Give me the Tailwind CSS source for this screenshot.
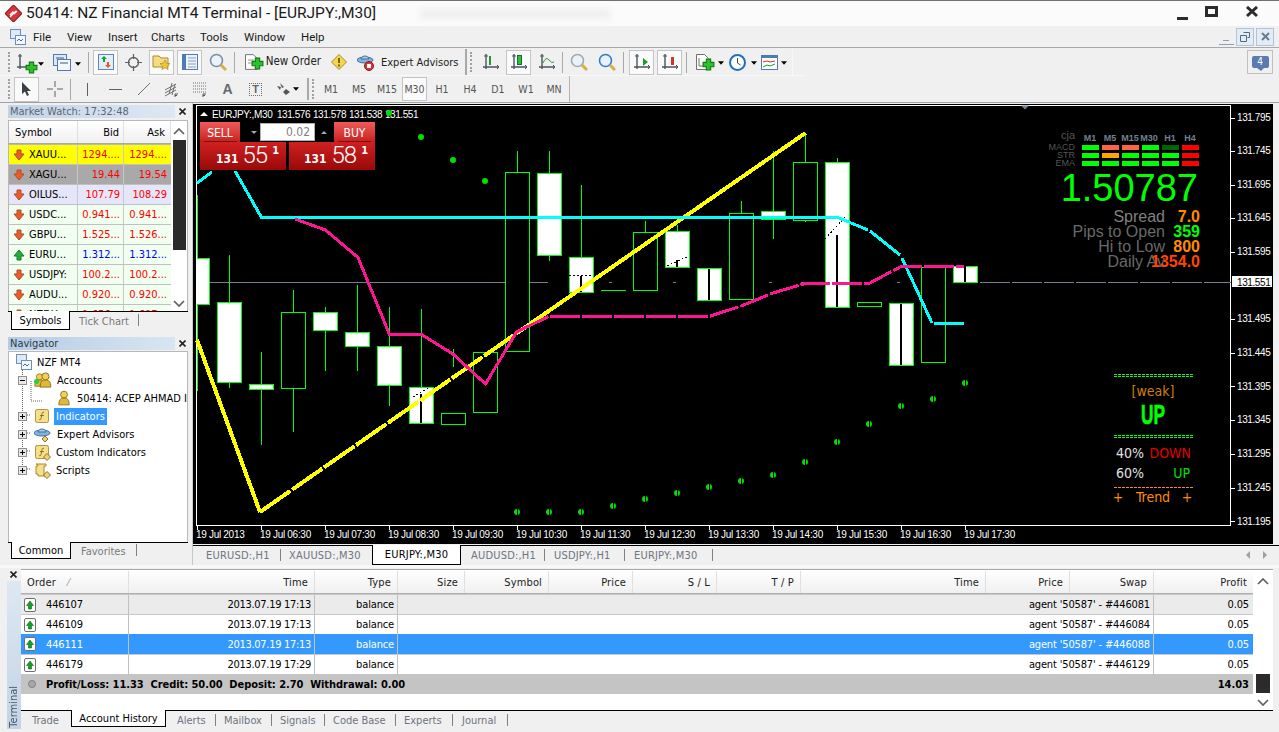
<!DOCTYPE html>
<html lang="en">
<head>
<meta charset="UTF-8">
<title>50414: NZ Financial MT4 Terminal</title>
<script src="https://cdn.jsdelivr.net/npm/@tailwindcss/browser@4"></script>
</head>
<body class="w-[1279px] h-[732px] overflow-hidden bg-[#f0f0f0] text-black text-[11px] leading-none font-['DejaVu_Sans_Condensed','DejaVu_Sans',sans-serif]">

<!-- shared small icons -->
<svg width="0" height="0" class="absolute">
  <symbol id="dn" viewBox="0 0 12 12"><path d="M4 1h4v4h3L6 11 1 5h3z" fill="#f0592a" stroke="#a8502a" stroke-width="1"/></symbol>
  <symbol id="up" viewBox="0 0 12 12"><path d="M4 11h4V7h3L6 1 1 7h3z" fill="#1fae3a" stroke="#1a7a2a" stroke-width="1"/></symbol>
  <symbol id="axes" viewBox="0 0 18 18"><path d="M4 1v15M1 14h16" stroke="#4a5560" stroke-width="1.4" fill="none"/><path d="M2 3h4M15 12l2 2-2 2" stroke="#4a5560" fill="none"/></symbol>
  <symbol id="plus" viewBox="0 0 12 12"><path d="M4 1h4v3h3v4H8v3H4V8H1V4h3z" fill="#2fc02f" stroke="#0c7a0c"/></symbol>
  <symbol id="lens" viewBox="0 0 18 18"><circle cx="7.5" cy="7.5" r="6" fill="#eaf3fa" stroke="currentColor" stroke-width="1.6"/><path d="M12 12l5 5" stroke="#d8b040" stroke-width="3"/></symbol>
  <symbol id="tree-plus" viewBox="0 0 9 9"><rect x=".5" y=".5" width="8" height="8" fill="#e8e8e8" stroke="#909090"/><path d="M2 4.5h5M4.5 2v5" stroke="#000"/></symbol>
  <symbol id="gold" viewBox="0 0 14 18"><circle cx="7" cy="5" r="4" fill="#f0cf5a" stroke="#8a6a10"/><path d="M1 17c0-7 3-8 6-8s6 1 6 8z" fill="#e2b83a" stroke="#8a6a10"/></symbol>
  <symbol id="ftile" viewBox="0 0 15 15"><rect x=".5" y=".5" width="14" height="14" rx="2" fill="#f6de8a" stroke="#a88a30"/><path d="M9.5 3.5C7.5 3 7.5 5 7 7.5S6.500 12 4.500 11.500M5.500 7h4" stroke="#8a6410" fill="none"/></symbol>
  <symbol id="small-diamond" viewBox="0 0 8 8"><path d="M4 .5L7.500 4 4 7.500 .5 4z" fill="#f0d070" stroke="#8a7030"/></symbol>
  <symbol id="chev-up" viewBox="0 0 12 7"><path d="M1 6l5-5 5 5" fill="none" stroke="#606060" stroke-width="1.700"/></symbol>
  <symbol id="chev-dn" viewBox="0 0 12 7"><path d="M1 1l5 5 5-5" fill="none" stroke="#606060" stroke-width="1.700"/></symbol>
  <symbol id="caret" viewBox="0 0 7 4"><path d="M0 0h7L3.500 4z" fill="#000"/></symbol>
  <symbol id="order-up" viewBox="0 0 12 14"><rect x=".5" y=".5" width="11" height="13" rx="1.500" fill="#fff" stroke="#707070"/><path d="M4.500 11V7.500H2.500L6 3l3.500 4.500H7.500V11z" fill="#12a028" stroke="#0a6a18" stroke-width=".6"/></symbol>
</svg>

<!-- title bar -->
<header class="h-[26px] flex items-center border-t border-[#707070] bg-[#fbfbfb] relative">
  <svg class="ml-[5px] w-[17px] h-[17px]" viewBox="0 0 17 17"><rect x="2.500" y="2.500" width="12" height="12" rx="1" transform="rotate(45 8.500 8.500)" fill="#d8343a" stroke="#8a1a20"/><path d="M5 10l3-3 1.500 1.500L12 6M5 12l6-6" stroke="#fff" stroke-width="1.300" fill="none"/></svg>
  <span class="ml-[4px] w-[328px] whitespace-nowrap text-[15.500px] text-[#1a1a1a] font-['Roboto',sans-serif]">50414: NZ Financial MT4 Terminal - [EURJPY:,M30]</span>
  <div class="ml-[66px] w-[190px] h-[10px] bg-[#eeeeee] blur-[3px]"></div>
  <div class="ml-auto flex items-center">
    <svg class="w-[12px] h-[12px] mr-[16px]" viewBox="0 0 12 12"><rect x="0" y="9" width="11" height="3" fill="#2b2b2b"/></svg>
    <svg class="w-[13px] h-[12px] mr-[28px] -mt-[3px]" viewBox="0 0 13 12"><path d="M0 0h13v11H0z M3 3v5h7V3z" fill="#2b2b2b" fill-rule="evenodd"/></svg>
    <svg class="w-[12px] h-[12px] mr-[21px] -mt-[3px]" viewBox="0 0 12 12"><path d="M1 1l10 9M11 1L1 10" stroke="#2b2b2b" stroke-width="3"/></svg>
  </div>
</header>

<!-- menu bar -->
<nav class="h-[22px] flex items-center border-b border-[#a8a8a8] text-[11.500px] text-[#1a1a1a] font-['Roboto',sans-serif]">
  <svg class="ml-[10px] w-[16px] h-[16px]" viewBox="0 0 16 16"><rect x=".5" y=".5" width="10" height="9" fill="#dfe9f5" stroke="#6a8fc0"/><rect x="5.500" y="6.500" width="10" height="9" fill="#f4f8fc" stroke="#6a8fc0"/><path d="M7 12l2-2 2 2 2-2" stroke="#3a6ab0" fill="none"/></svg>
  <span class="ml-[7px] w-[34px] pt-[2px]">File</span>
  <span class="w-[41px] pt-[2px]">View</span>
  <span class="w-[43px] pt-[2px]">Insert</span>
  <span class="w-[49px] pt-[2px]">Charts</span>
  <span class="w-[44px] pt-[2px]">Tools</span>
  <span class="w-[57px] pt-[2px]">Window</span>
  <span class="pt-[2px]">Help</span>
  <div class="ml-auto flex items-center gap-[2px] mr-[5px] h-[19px]">
    <svg class="w-[15px] h-[5px] mt-[12px]" viewBox="0 0 15 5"><path d="M4 0h6v1H4zM0 4h15v1H0z" fill="#8aa0bc"/></svg>
    <span class="w-[18px] h-[18px] border border-[#b4c4d8] bg-[#e2ecf7] flex items-center justify-center"><svg class="w-[10px] h-[10px]" viewBox="0 0 10 10"><path d="M3.500 .5h6v5h-2M.5 3.500h6v6h-6z" fill="none" stroke="#55687e"/></svg></span>
    <span class="w-[18px] h-[18px] border border-[#b4c4d8] bg-[#e2ecf7] flex items-center justify-center"><svg class="w-[9px] h-[9px]" viewBox="0 0 9 9"><path d="M1 1l7 7M8 1L1 8" stroke="#6a7b90" stroke-width="2"/></svg></span>
  </div>
</nav>

<!-- toolbars -->
<div class="relative h-[55px] pt-[1px] border-b border-[#a0a0a0]">
  <div class="h-[26px] flex items-center text-[#222]">
    <div class="ml-[8px] w-[3px] h-[20px] border-l-2 border-dotted border-[#a0a0a0]"></div>
    <button class="w-[36px] h-[25px] flex items-center pl-[5px] relative">
      <svg class="w-[18px] h-[18px]"><use href="#axes"/></svg>
      <svg class="absolute left-[14px] top-[11px] w-[13px] h-[13px]"><use href="#plus"/></svg>
      <svg class="absolute left-[27px] top-[12px] w-[6px] h-[4px]"><use href="#caret"/></svg>
    </button>
    <button class="w-[37px] h-[25px] flex items-center pl-[6px] relative">
      <svg class="w-[18px] h-[17px]" viewBox="0 0 18 17"><rect x=".5" y=".5" width="13" height="11" fill="#dce8f5" stroke="#4f7bb2"/><rect x="4.500" y="5.500" width="13" height="11" fill="#f2f7fc" stroke="#4f7bb2"/><path d="M3 4h8M7 9h8" stroke="#3a5a80"/></svg>
      <svg class="absolute left-[28px] top-[12px] w-[6px] h-[4px]"><use href="#caret"/></svg>
    </button>
    <div class="mx-[4px] w-[1px] h-[21px] bg-[#a8a8a8]"></div>
    <button class="w-[25px] h-[25px] border border-[#c4c4c4] bg-[#fafafa] flex items-center justify-center">
      <svg class="w-[16px] h-[16px]" viewBox="0 0 16 16"><rect x=".5" y=".5" width="15" height="15" fill="#e4eef9" stroke="#5b86bc"/><path d="M5 8V5H3l3-3 3 3H7v3z" fill="#16a030"/><path d="M9 8v3H7l3 3 3-3h-2V8z" fill="#e8572a"/></svg>
    </button>
    <button class="ml-[3px] w-[25px] h-[25px] flex items-center justify-center">
      <svg class="w-[17px] h-[17px]" viewBox="0 0 17 17"><circle cx="8.500" cy="8.500" r="5" fill="none" stroke="#606060" stroke-width="1.400"/><path d="M8.500 0v5M8.500 12v5M0 8.500h5M12 8.500h5" stroke="#606060" stroke-width="1.200"/></svg>
    </button>
    <button class="ml-[3px] w-[25px] h-[25px] border border-[#c4c4c4] bg-[#fafafa] flex items-center justify-center">
      <svg class="w-[19px] h-[18px]" viewBox="0 0 19 18"><path d="M1 3h6l2 2h7v9H1z" fill="#f5dc80" stroke="#a88a30"/><path d="M13 7l1.500 3.200 3.500.4-2.600 2.400.7 3.500-3.100-1.800L9.900 16.500l.7-3.500L8 10.600l3.500-.4z" fill="#f0c830" stroke="#a88a30" stroke-width=".7"/></svg>
    </button>
    <button class="ml-[3px] w-[25px] h-[25px] border border-[#c4c4c4] bg-[#fafafa] flex items-center justify-center">
      <svg class="w-[16px] h-[16px]" viewBox="0 0 16 16"><rect x=".5" y=".5" width="15" height="15" fill="#edf3fa" stroke="#4f7bb2"/><path d="M1 1h3v14H1z" fill="#4f7bb2"/><path d="M6 4h8M6 7h8M6 10h8M6 13h8" stroke="#8aa0bc"/></svg>
    </button>
    <button class="ml-[3px] w-[25px] h-[25px] flex items-center justify-center text-[#7a8ea8]">
      <svg class="w-[18px] h-[18px]"><use href="#lens"/></svg>
    </button>
    <div class="mx-[4px] w-[1px] h-[21px] bg-[#a8a8a8]"></div>
    <button class="ml-[6px] flex items-center w-[76px] relative">
      <svg class="w-[13px] h-[16px]" viewBox="0 0 13 16"><path d="M.5.5h8l4 4v11H.5z" fill="#fff" stroke="#707070"/><path d="M3 6h6M3 9h6" stroke="#909090"/></svg>
      <svg class="absolute left-[6px] top-[3px] w-[13px] h-[13px]"><use href="#plus"/></svg>
      <span class="ml-[8px] text-[11.500px] whitespace-nowrap">New Order</span>
    </button>
    <button class="ml-[5px] w-[25px] h-[25px] flex items-center justify-center">
      <svg class="w-[16px] h-[16px]" viewBox="0 0 16 16"><path d="M8 .5L15.500 8 8 15.500 .5 8z" fill="#f5d54a" stroke="#a88a30"/><path d="M8 4v5M8 10.500v2" stroke="#5a4a10" stroke-width="1.600"/></svg>
    </button>
    <button class="ml-[4px] flex items-center w-[110px]">
      <svg class="ml-[2px] w-[17px] h-[17px]" viewBox="0 0 17 17"><ellipse cx="8" cy="6" rx="8" ry="3" fill="#7fb6e0" stroke="#3f6f9a"/><path d="M4 5c1-4 7-4 8 0z" fill="#a9cdea" stroke="#3f6f9a"/><circle cx="12" cy="12" r="4.500" fill="#d8343a" stroke="#8a1a20"/><rect x="10" y="10" width="4" height="4" fill="#fff"/></svg>
      <span class="ml-[7px] text-[11px] text-[#222] whitespace-nowrap">Expert Advisors</span>
    </button>
    <div class="w-[2px] h-[26px] bg-[#a8a8a8]"></div>
    <div class="ml-[3px] w-[2px] h-[20px] border-l-2 border-dotted border-[#a0a0a0]"></div>
    <button class="ml-[6px] w-[25px] h-[25px] flex items-center justify-center relative"><svg class="w-[18px] h-[18px]"><use href="#axes"/></svg><span class="absolute left-[11px] top-[6px] w-[2px] h-[9px] bg-[#1a9a30]"></span></button>
    <button class="ml-[3px] w-[25px] h-[25px] border border-[#c4c4c4] bg-[#fafafa] flex items-center justify-center relative"><svg class="w-[18px] h-[18px]"><use href="#axes"/></svg><span class="absolute left-[10px] top-[4px] w-[5px] h-[10px] bg-[#2ec03a] border border-[#15702a]"></span></button>
    <button class="ml-[3px] w-[25px] h-[25px] flex items-center justify-center relative"><svg class="w-[18px] h-[18px]" viewBox="0 0 18 18"><use href="#axes"/><path d="M5 10q3-7 6-3t5 2" stroke="#2a9a3a" fill="none"/></svg></button>
    <div class="mx-[3px] w-[1px] h-[21px] bg-[#a8a8a8]"></div>
    <button class="w-[25px] h-[25px] flex items-center justify-center text-[#a0a8b0]"><svg class="w-[18px] h-[18px]"><use href="#lens"/></svg></button>
    <button class="ml-[3px] w-[25px] h-[25px] flex items-center justify-center text-[#2f7fd0]"><svg class="w-[18px] h-[18px]"><use href="#lens"/></svg></button>
    <div class="mx-[4px] w-[1px] h-[21px] bg-[#a8a8a8]"></div>
    <button class="ml-[1px] w-[25px] h-[25px] border border-[#c4c4c4] bg-[#fafafa] flex items-center justify-center relative"><svg class="w-[18px] h-[18px]"><use href="#axes"/></svg><span class="absolute left-[13px] top-[7px] border-l-[5px] border-l-[#1a9a30] border-y-[4px] border-y-transparent"></span></button>
    <button class="ml-[3px] w-[25px] h-[25px] border border-[#c4c4c4] bg-[#fafafa] flex items-center justify-center relative"><svg class="w-[18px] h-[18px]"><use href="#axes"/></svg><span class="absolute left-[13px] top-[6px] w-[3px] h-[8px] bg-[#d83030]"></span></button>
    <div class="ml-[4px] w-[1px] h-[21px] bg-[#a8a8a8]"></div>
    <button class="ml-[9px] w-[30px] flex items-center relative">
      <svg class="w-[13px] h-[16px]" viewBox="0 0 13 16"><path d="M.5.5h8l4 4v11H.5z" fill="#fff" stroke="#707070"/><path d="M3 4v8h6" stroke="#707070" fill="none"/></svg>
      <svg class="absolute left-[6px] top-[4px] w-[13px] h-[13px]"><use href="#plus"/></svg>
      <svg class="absolute left-[22px] top-[7px] w-[6px] h-[4px]"><use href="#caret"/></svg>
    </button>
    <button class="ml-[3px] w-[30px] flex items-center relative">
      <svg class="w-[17px] h-[17px]" viewBox="0 0 17 17"><circle cx="8.500" cy="8.500" r="7.500" fill="#fff" stroke="#1f6fc0" stroke-width="2"/><path d="M8.500 4v5l3 2" stroke="#444" fill="none"/></svg>
      <svg class="absolute left-[22px] top-[7px] w-[6px] h-[4px]"><use href="#caret"/></svg>
    </button>
    <button class="ml-[2px] w-[28px] flex items-center relative">
      <svg class="w-[17px] h-[15px]" viewBox="0 0 17 15"><rect x=".5" y=".5" width="16" height="14" fill="#fff" stroke="#4f7bb2"/><rect x="1" y="1" width="15" height="2" fill="#4f7bb2"/><path d="M2 7l4-1 3 1 5-1" stroke="#d83030" fill="none"/><path d="M2 12l4-2 3 1 5-2" stroke="#1a9a30" fill="none"/></svg>
      <svg class="absolute left-[20px] top-[6px] w-[6px] h-[4px]"><use href="#caret"/></svg>
    </button>
    <div class="ml-[3px] w-[1px] h-[26px] bg-[#f8f8f8]"></div>
    <div class="ml-auto mr-[6px] w-[26px] h-[24px] border border-[#c0c0c0] flex items-center justify-center">
      <div class="relative w-[17px] h-[12px] rounded-[2px] bg-[#5a7bb0] flex items-center justify-center text-white text-[10px]">4<span class="absolute left-[5px] -bottom-[3px] border-l-[4px] border-l-transparent border-r-[3px] border-r-transparent border-t-[3px] border-t-[#5a7bb0]"></span></div>
    </div>
  </div>
  <div class="h-[1px] w-[804px] bg-[#f8f8f8]"></div>
  <div class="h-[26px] flex items-center text-[#444]">
    <div class="ml-[8px] w-[3px] h-[20px] border-l-2 border-dotted border-[#a0a0a0]"></div>
    <button class="ml-[3px] w-[25px] h-[25px] border border-[#c4c4c4] bg-[#fafafa] flex items-center justify-center">
      <svg class="w-[11px] h-[15px]" viewBox="0 0 11 15"><path d="M1 0v12l3-2.500L6 14l2-1-2-4h4z" fill="#3a3f45"/></svg>
    </button>
    <button class="ml-[3px] w-[25px] h-[25px] flex items-center justify-center"><svg class="w-[16px] h-[16px]" viewBox="0 0 16 16"><path d="M8 0v6M8 10v6M0 8h6M10 8h6" stroke="#606060"/></svg></button>
    <div class="ml-[3px] w-[1px] h-[21px] bg-[#a8a8a8]"></div>
    <button class="ml-[4px] w-[25px] h-[25px] flex items-center justify-center"><span class="w-[1px] h-[13px] bg-[#606060]"></span></button>
    <button class="ml-[3px] w-[25px] h-[25px] flex items-center justify-center"><span class="w-[13px] h-[1px] bg-[#606060]"></span></button>
    <button class="ml-[3px] w-[25px] h-[25px] flex items-center justify-center"><svg class="w-[14px] h-[14px]" viewBox="0 0 14 14"><path d="M1 13L13 1" stroke="#707070"/></svg></button>
    <button class="ml-[3px] w-[25px] h-[25px] flex items-center justify-center"><svg class="w-[16px] h-[17px]" viewBox="0 0 16 17"><path d="M1 9l11-6M1 12l11-6M1 15l11-6M5 13l3-11M8 14l3-11" stroke="#707070" fill="none"/><path d="M11 16v-3h3M11 14.500h2" stroke="#555" fill="none"/></svg></button>
    <button class="ml-[3px] w-[25px] h-[25px] flex items-center justify-center"><svg class="w-[16px] h-[17px]" viewBox="0 0 16 17"><path d="M1 2h13M1 5h13M1 8h13M1 11h13" stroke="#707070" stroke-dasharray="1 1"/><path d="M11 16v-3h3M11 14.500h2" stroke="#555" fill="none"/></svg></button>
    <button class="ml-[3px] w-[25px] h-[25px] flex items-center justify-center text-[14px] font-bold text-[#606870] font-['Liberation_Sans',sans-serif]">A</button>
    <button class="ml-[3px] w-[25px] h-[25px] flex items-center justify-center"><span class="w-[13px] h-[13px] border border-dotted border-[#707070] flex items-center justify-center text-[11px] font-bold text-[#606870] font-['Liberation_Sans',sans-serif]">T</span></button>
    <button class="ml-[3px] w-[36px] h-[25px] flex items-center pl-[6px]">
      <svg class="w-[14px] h-[13px]" viewBox="0 0 14 13"><path d="M3 0l4 4-2 1zM0 3l4 1-1 3zM9 6l4 3-4 3-3-3z" fill="#555"/></svg>
      <svg class="ml-[2px] w-[6px] h-[4px]"><use href="#caret"/></svg>
    </button>
    <div class="w-[2px] h-[22px] bg-[#a8a8a8]"></div>
    <div class="ml-[3px] w-[2px] h-[20px] border-l-2 border-dotted border-[#a0a0a0]"></div>
    <div class="ml-[3px] flex items-center text-[#555] text-[10.500px]">
      <span class="w-[28px] text-center">M1</span>
      <span class="w-[28px] text-center">M5</span>
      <span class="w-[28px] text-center">M15</span>
      <span class="w-[25px] h-[24px] mx-[1px] border border-[#c4c4c4] bg-[#fafafa] flex items-center justify-center">M30</span>
      <span class="w-[28px] text-center">H1</span>
      <span class="w-[28px] text-center">H4</span>
      <span class="w-[28px] text-center">D1</span>
      <span class="w-[28px] text-center">W1</span>
      <span class="w-[28px] text-center">MN</span>
    </div>
    <div class="ml-[1px] w-[1px] h-[26px] bg-[#b4b4b4]"></div>
  </div>
</div>

<!-- workspace -->
<main class="h-[462px] flex">
  <!-- left docks -->
  <aside class="w-[193px] pl-[8px] pr-[4px] pt-[2px] border-r border-[#c8c8c8]">
    <section class="h-[228px]">
      <div class="h-[13px] w-[167px] flex items-center pl-[2px] bg-gradient-to-r from-[#c3d4e6] to-[#dde8f3] text-[#5a6673] relative">Market Watch: 17:32:48
        <svg class="absolute left-[171px] top-[3px] w-[7px] h-[7px]" viewBox="0 0 7 7"><path d="M.5.5l6 6M6.500.5l-6 6" stroke="#222" stroke-width="1.600"/></svg>
      </div>
      <div class="mt-[2px] relative h-[191px] bg-white border border-[#b8b8b8] border-b-0 flex overflow-hidden">
        <div class="w-[162px] overflow-hidden">
          <div class="h-[23px] grid grid-cols-[69px_46px_47px] items-center bg-gradient-to-b from-white to-[#f0f0f0] border-b border-[#a8a8a8]">
            <span class="pl-[6px] h-full flex items-center border-r border-[#e0e0e0]">Symbol</span>
            <span class="pr-[4px] h-full flex items-center justify-end border-r border-[#e0e0e0]">Bid</span>
            <span class="pr-[5px] h-full flex items-center justify-end border-r border-[#e0e0e0]">Ask</span>
          </div>
          <div class="h-[20px] grid grid-cols-[69px_46px_47px] items-center bg-[#ffff00] border-t border-[#b8b8b8] text-[#ff0000]">
            <span class="flex items-center pl-[4px] h-full border-r border-[#c8c8c8] text-black"><svg class="w-[12px] h-[12px] mr-[4px]"><use href="#dn"/></svg>XAUU...</span>
            <span class="text-right pr-[3px] h-full flex items-center justify-end border-r border-[#c8c8c8]">1294....</span>
            <span class="text-right pr-[4px]">1294....</span>
          </div>
          <div class="h-[20px] grid grid-cols-[69px_46px_47px] items-center bg-[#a9a9a9] border-t border-[#c0c0c0] text-[#ff0000]">
            <span class="flex items-center pl-[4px] h-full border-r border-[#c8c8c8] text-black"><svg class="w-[12px] h-[12px] mr-[4px]"><use href="#dn"/></svg>XAGU...</span>
            <span class="text-right pr-[3px] h-full flex items-center justify-end border-r border-[#c8c8c8]">19.44</span>
            <span class="text-right pr-[4px]">19.54</span>
          </div>
          <div class="h-[20px] grid grid-cols-[69px_46px_47px] items-center bg-[#e6e6fa] border-t border-[#c0c0c0] text-[#ff0000]">
            <span class="flex items-center pl-[4px] h-full border-r border-[#c8c8c8] text-black"><svg class="w-[12px] h-[12px] mr-[4px]"><use href="#dn"/></svg>OILUS...</span>
            <span class="text-right pr-[3px] h-full flex items-center justify-end border-r border-[#c8c8c8]">107.79</span>
            <span class="text-right pr-[4px]">108.29</span>
          </div>
          <div class="h-[20px] grid grid-cols-[69px_46px_47px] items-center bg-[#f0fff0] border-t border-[#c0c0c0] text-[#ff0000]">
            <span class="flex items-center pl-[4px] h-full border-r border-[#c8c8c8] text-black"><svg class="w-[12px] h-[12px] mr-[4px]"><use href="#dn"/></svg>USDC...</span>
            <span class="text-right pr-[3px] h-full flex items-center justify-end border-r border-[#c8c8c8]">0.941...</span>
            <span class="text-right pr-[4px]">0.941...</span>
          </div>
          <div class="h-[20px] grid grid-cols-[69px_46px_47px] items-center bg-[#f0fff0] border-t border-[#c0c0c0] text-[#ff0000]">
            <span class="flex items-center pl-[4px] h-full border-r border-[#c8c8c8] text-black"><svg class="w-[12px] h-[12px] mr-[4px]"><use href="#dn"/></svg>GBPU...</span>
            <span class="text-right pr-[3px] h-full flex items-center justify-end border-r border-[#c8c8c8]">1.525...</span>
            <span class="text-right pr-[4px]">1.526...</span>
          </div>
          <div class="h-[20px] grid grid-cols-[69px_46px_47px] items-center bg-[#f0fff0] border-t border-[#c0c0c0] text-[#0000ff]">
            <span class="flex items-center pl-[4px] h-full border-r border-[#c8c8c8] text-black"><svg class="w-[12px] h-[12px] mr-[4px]"><use href="#up"/></svg>EURU...</span>
            <span class="text-right pr-[3px] h-full flex items-center justify-end border-r border-[#c8c8c8]">1.312...</span>
            <span class="text-right pr-[4px]">1.312...</span>
          </div>
          <div class="h-[20px] grid grid-cols-[69px_46px_47px] items-center bg-[#f0fff0] border-t border-[#c0c0c0] text-[#ff0000]">
            <span class="flex items-center pl-[4px] h-full border-r border-[#c8c8c8] text-black"><svg class="w-[12px] h-[12px] mr-[4px]"><use href="#dn"/></svg>USDJPY:</span>
            <span class="text-right pr-[3px] h-full flex items-center justify-end border-r border-[#c8c8c8]">100.2...</span>
            <span class="text-right pr-[4px]">100.2...</span>
          </div>
          <div class="h-[20px] grid grid-cols-[69px_46px_47px] items-center bg-[#f0fff0] border-t border-[#c0c0c0] text-[#ff0000]">
            <span class="flex items-center pl-[4px] h-full border-r border-[#c8c8c8] text-black"><svg class="w-[12px] h-[12px] mr-[4px]"><use href="#dn"/></svg>AUDU...</span>
            <span class="text-right pr-[3px] h-full flex items-center justify-end border-r border-[#c8c8c8]">0.920...</span>
            <span class="text-right pr-[4px]">0.920...</span>
          </div>
          <div class="h-[20px] grid grid-cols-[69px_46px_47px] items-center bg-[#f0fff0] border-t border-[#c0c0c0] text-[#ff0000]">
            <span class="flex items-center pl-[4px] h-full border-r border-[#c8c8c8] text-black"><svg class="w-[12px] h-[12px] mr-[4px]"><use href="#dn"/></svg>NZDU...</span>
            <span class="text-right pr-[3px] h-full flex items-center justify-end border-r border-[#c8c8c8]">1.656...</span>
            <span class="text-right pr-[4px]">1.697...</span>
          </div>
        </div>
        <div class="flex-1 flex flex-col items-center bg-white relative">
          <svg class="mt-[7px] w-[12px] h-[7px]"><use href="#chev-up"/></svg>
          <div class="mt-[5px] w-[13px] h-[110px] bg-[#2b2b2b]"></div>
          <svg class="absolute bottom-[4px] w-[12px] h-[7px]"><use href="#chev-dn"/></svg>
        </div>
      </div>
      <div class="h-[20px] flex items-start pl-[3px] border-t border-black ml-0 text-[#7a7a7a]">
        <span class="w-[59px] h-[19px] -mt-[1px] bg-white border-x border-b border-black text-black flex items-center justify-center">Symbols</span>
        <span class="ml-[9px] mt-[4px]">Tick Chart</span>
        <span class="ml-[9px] mt-[2px] w-[1px] h-[12px] bg-[#808080]"></span>
      </div>
    </section>
    <section class="mt-[4px]">
      <div class="h-[13px] w-[167px] flex items-center pl-[2px] bg-gradient-to-r from-[#b4cce4] to-[#d8e6f2] text-[#2b3a4a] relative">Navigator
        <svg class="absolute left-[171px] top-[3px] w-[7px] h-[7px]" viewBox="0 0 7 7"><path d="M.5.5l6 6M6.500.5l-6 6" stroke="#222" stroke-width="1.600"/></svg>
      </div>
      <div class="mt-[1px] h-[191px] w-[180px] bg-white border border-[#b8b8b8] border-b-0 overflow-hidden whitespace-nowrap relative">
        <svg class="absolute left-0 top-0 w-[80px] h-[130px]" viewBox="0 0 80 130"><path d="M13.500 18v102M13.500 26v0M22 29v20h12M14 63h8M14 81h8M14 99h8M14 117h8" stroke="#606060" stroke-dasharray="1 1" fill="none"/></svg>
        <div class="h-[18px] mt-[1px] flex items-center relative pl-[7px]">
          <svg class="w-[16px] h-[16px]" viewBox="0 0 16 16"><rect x=".5" y=".5" width="10" height="9" fill="#dfe9f5" stroke="#6a8fc0"/><rect x="5.500" y="6.500" width="10" height="9" fill="#f4f8fc" stroke="#6a8fc0"/><path d="M7 12l2-2 2 2 2-2" stroke="#3a6ab0" fill="none"/></svg>
          <span class="ml-[5px]">NZF MT4</span>
        </div>
        <div class="h-[18px] flex items-center relative pl-[9px]">
          <svg class="w-[9px] h-[9px]" viewBox="0 0 9 9"><rect x=".5" y=".5" width="8" height="8" fill="#e8e8e8" stroke="#909090"/><path d="M2 4.500h5" stroke="#000"/></svg>
          <span class="relative ml-[7px] w-[18px] h-[17px]"><svg class="absolute left-[0px] top-[1px] w-[11px] h-[14px]"><use href="#gold"/></svg><svg class="absolute left-[5px] top-[0px] w-[13px] h-[16px]"><use href="#gold"/></svg><span class="absolute left-0 top-[7px] w-[5px] h-[5px] rounded-full bg-[#2ecc40]"></span></span>
          <span class="ml-[5px]">Accounts</span>
        </div>
        <div class="h-[18px] flex items-center relative pl-[49px]">
          <svg class="w-[13px] h-[16px]"><use href="#gold"/></svg>
          <span class="ml-[7px] text-black">50414: ACEP AHMAD I</span>
        </div>
        <div class="h-[18px] flex items-center relative pl-[9px]">
          <svg class="w-[9px] h-[9px]"><use href="#tree-plus"/></svg>
          <svg class="ml-[8px] w-[14px] h-[14px]"><use href="#ftile"/></svg>
          <span class="ml-[5px] h-[17px] px-[2px] flex items-center bg-[#3399ff] text-white">Indicators</span>
        </div>
        <div class="h-[18px] flex items-center relative pl-[9px]">
          <svg class="w-[9px] h-[9px]"><use href="#tree-plus"/></svg>
          <svg class="ml-[7px] w-[17px] h-[15px]" viewBox="0 0 17 15"><ellipse cx="8" cy="6" rx="8" ry="3" fill="#7fb6e0" stroke="#3f6f9a"/><path d="M4 5c1-4 7-4 8 0z" fill="#a9cdea" stroke="#3f6f9a"/><path d="M11 9l3 3-3 3-3-3z" fill="#f0d070" stroke="#8a7030"/></svg>
          <span class="ml-[6px]">Expert Advisors</span>
        </div>
        <div class="h-[18px] flex items-center relative pl-[9px]">
          <svg class="w-[9px] h-[9px]"><use href="#tree-plus"/></svg>
          <span class="relative ml-[8px] w-[15px] h-[15px]"><svg class="w-[14px] h-[14px]"><use href="#ftile"/></svg><svg class="absolute left-[8px] top-[8px] w-[8px] h-[8px]"><use href="#small-diamond"/></svg></span>
          <span class="ml-[6px]">Custom Indicators</span>
        </div>
        <div class="h-[18px] flex items-center relative pl-[9px]">
          <svg class="w-[9px] h-[9px]"><use href="#tree-plus"/></svg>
          <span class="relative ml-[8px] w-[15px] h-[15px]"><svg class="w-[12px] h-[14px]" viewBox="0 0 12 14"><path d="M1 1h10v2H9v9h2v1H3v-2H1V3h2V2z" fill="#f6de8a" stroke="#a88a30"/></svg><svg class="absolute left-[8px] top-[8px] w-[8px] h-[8px]"><use href="#small-diamond"/></svg></span>
          <span class="ml-[6px]">Scripts</span>
        </div>
      </div>
      <div class="h-[19px] w-[180px] flex items-start pl-[3px] border-t border-black text-[#7a7a7a]">
        <span class="w-[60px] h-[17px] -mt-[1px] bg-white border-x border-b border-black text-black flex items-center justify-center">Common</span>
        <span class="ml-[10px] mt-[3px]">Favorites</span>
        <span class="ml-[10px] mt-[1px] w-[1px] h-[12px] bg-[#808080]"></span>
      </div>
    </section>
  </aside>

  <!-- chart and its tabs -->
  <div class="flex-1 flex flex-col">
    <div class="relative h-[441px] mr-[6px] bg-black overflow-hidden">
      <svg class="block w-[1080px] h-[441px]" viewBox="193 103 1080 441">
        <rect x="193" y="103" width="1080" height="1" fill="#f0f0f0"/>
        <g shape-rendering="crispEdges">
          <rect x="196" y="105" width="1035" height="1" fill="#fff"/><rect x="196" y="525" width="1035" height="1" fill="#fff"/>
          <rect x="196" y="105" width="1" height="421" fill="#fff"/><rect x="1230" y="105" width="1" height="421" fill="#fff"/>
          <path d="M209 282.500H545" stroke="#708090"/>
          <path d="M545 282.500H980" stroke="#708090" stroke-dasharray="3 29"/>
          <path d="M980 282.500H1231" stroke="#708090" stroke-dasharray="30 2"/>
          <g id="candles"></g>
          <!-- black overdraw inside the white bodies -->
          <path stroke="#000" stroke-width="2" fill="none" d="M421 394V423M581 276V292M677 260V267M709 269V300M837 235V307M901 304V365M965 266V282"/>
          <path stroke="#000" stroke-dasharray="2 2" fill="none" d="M413 397L428 388M569 275.500H593M667 266L689 256M825 239L847 215"/>
          <!-- indicator lines -->
          <path stroke="#ffff00" stroke-width="4" fill="none" d="M197 340L260 512"/>
          <path stroke="#ffff00" stroke-width="4" fill="none" stroke-dasharray="37 2" d="M260 512L517 333"/>
          <path stroke="#ffff00" stroke-width="4" fill="none" d="M517 333L805.500 133"/>
          <path stroke="#00ffff" stroke-width="3" fill="none" d="M197 183L212 172M235 171L261.500 217.500H838L868 230"/>
          <path stroke="#00ffff" stroke-width="3" fill="none" d="M870 231L900 255M902 258L932 323"/>
          <path stroke="#00ffff" stroke-width="3" fill="none" d="M934 323.500H964"/>
          <path stroke="#ff1493" stroke-width="3" fill="none" d="M295 219L325.500 230L358 257.500L389.500 334.500H421.500L453 354L485.500 384L516.500 332L548.500 316.500"/>
          <path stroke="#ff1493" stroke-width="3" fill="none" stroke-dasharray="30 2" d="M550 316.500H709L741 306L773 293L805 283.500H869L901 266.500H964"/>
        </g>
        <!-- parabolic dots -->
        <g fill="#00e000">
          <circle cx="421" cy="137" r="3"/><circle cx="453" cy="160" r="3"/><circle cx="485" cy="181" r="3"/>
          <ellipse cx="517" cy="512" rx="3" ry="3"/><ellipse cx="549" cy="512" rx="3" ry="3"/><ellipse cx="581" cy="512" rx="3" ry="3"/>
          <ellipse cx="613" cy="506" rx="3" ry="3"/><ellipse cx="645" cy="499" rx="3" ry="3"/><ellipse cx="677" cy="493" rx="3" ry="3"/>
          <ellipse cx="709" cy="487" rx="3" ry="3"/><ellipse cx="741" cy="481" rx="3" ry="3"/><ellipse cx="773" cy="475" rx="3" ry="3"/>
          <ellipse cx="805" cy="462" rx="3" ry="3"/><ellipse cx="837" cy="442" rx="3" ry="3"/><ellipse cx="869" cy="424" rx="3" ry="3"/>
          <ellipse cx="901" cy="406" rx="3" ry="3"/><ellipse cx="933" cy="399" rx="3" ry="3"/><ellipse cx="965" cy="383" rx="3" ry="3"/>
        </g>
        <path stroke="#000" fill="none" shape-rendering="crispEdges" d="M517.500 508v8M549.500 508v8M581.500 508v8M613.500 502v8M645.500 495v8M677.500 489v8M709.500 483v8M741.500 477v8M773.500 471v8M805.500 458v8M837.500 438v8M869.500 420v8M901.500 402v8M933.500 395v8M965.500 379v8"/>
        <!-- chart header -->
        <path d="M200 116l4-4 4 4z" fill="#fff"/>
        <g fill="#fff" class="text-[10px] tracking-[-0.45px] font-['Liberation_Sans',sans-serif]">
          <text y="118"><tspan x="212" class="tracking-[-0.3px]">EURJPY:,M30</tspan><tspan x="277">131.576</tspan><tspan x="313">131.578</tspan><tspan x="349">131.538</tspan><tspan x="385">131.551</tspan></text>
        </g>
        <circle cx="389" cy="113" r="3" fill="#00e000"/>
        <path d="M1021 105.500h8l-4 4z" fill="#708090"/>
        <!-- price axis -->
        <path stroke="#fff" shape-rendering="crispEdges" d="M1231 118.500h4M1231 151.500h4M1231 185.500h4M1231 218.500h4M1231 252.500h4M1231 319.500h4M1231 353.500h4M1231 386.500h4M1231 420.500h4M1231 454.500h4M1231 488.500h4M1231 521.500h4"/>
        <g fill="#fff" class="text-[10px] tracking-[-0.4px] font-['Liberation_Sans',sans-serif]">
          <text x="1237" y="121">131.795</text><text x="1237" y="154">131.745</text><text x="1237" y="188">131.695</text><text x="1237" y="221">131.645</text><text x="1237" y="255">131.595</text>
          <text x="1237" y="322">131.495</text><text x="1237" y="356">131.445</text><text x="1237" y="390">131.395</text><text x="1237" y="423">131.345</text><text x="1237" y="457">131.295</text><text x="1237" y="491">131.245</text><text x="1237" y="525">131.195</text>
        </g>
        <rect x="1232" y="276" width="40" height="11" fill="#fff"/>
        <text x="1237" y="285.500" fill="#000" class="text-[10px] tracking-[-0.4px] font-['Liberation_Sans',sans-serif]">131.551</text>
        <!-- time axis -->
        <path stroke="#fff" shape-rendering="crispEdges" d="M197.500 526v4M261.500 526v4M325.500 526v4M389.500 526v4M453.500 526v4M517.500 526v4M581.500 526v4M645.500 526v4M709.500 526v4M773.500 526v4M837.500 526v4M901.500 526v4M965.500 526v4"/>
        <g fill="#fff" class="text-[10px] tracking-[-0.3px] font-['Liberation_Sans',sans-serif]">
          <text x="196" y="538">19 Jul 2013</text><text x="260" y="538">19 Jul 06:30</text><text x="324" y="538">19 Jul 07:30</text><text x="388" y="538">19 Jul 08:30</text><text x="452" y="538">19 Jul 09:30</text><text x="516" y="538">19 Jul 10:30</text><text x="580" y="538">19 Jul 11:30</text><text x="644" y="538">19 Jul 12:30</text><text x="708" y="538">19 Jul 13:30</text><text x="772" y="538">19 Jul 14:30</text><text x="836" y="538">19 Jul 15:30</text><text x="900" y="538">19 Jul 16:30</text><text x="964" y="538">19 Jul 17:30</text>
        </g>
        <!-- signal table -->
        <g text-anchor="end" fill="#555" class="text-[9px] font-['Liberation_Sans',sans-serif]">
          <text x="1075" y="139" class="text-[11px]">cja</text><text x="1075" y="150">MACD</text><text x="1075" y="158">STR</text><text x="1075" y="166">EMA</text>
        </g>
        <g text-anchor="middle" fill="#708090" font-weight="700" class="text-[9px] font-['Liberation_Sans',sans-serif]">
          <text x="1090" y="140.500">M1</text><text x="1110" y="140.500">M5</text><text x="1130" y="140.500">M15</text><text x="1149" y="140.500">M30</text><text x="1170" y="140.500">H1</text><text x="1190" y="140.500">H4</text>
        </g>
        <g shape-rendering="crispEdges">
          <rect x="1082" y="145" width="17" height="5" fill="#00ff00"/><rect x="1102" y="145" width="17" height="5" fill="#ff6347"/><rect x="1122" y="145" width="17" height="5" fill="#ff6347"/><rect x="1142" y="145" width="17" height="5" fill="#00ff00"/><rect x="1162" y="145" width="17" height="5" fill="#006400"/><rect x="1182" y="145" width="17" height="5" fill="#ff0000"/>
          <rect x="1082" y="153" width="17" height="5" fill="#00ff00"/><rect x="1102" y="153" width="17" height="5" fill="#ffa500"/><rect x="1122" y="153" width="17" height="5" fill="#00ff00"/><rect x="1142" y="153" width="17" height="5" fill="#00ff00"/><rect x="1162" y="153" width="17" height="5" fill="#00ff00"/><rect x="1182" y="153" width="17" height="5" fill="#ff0000"/>
          <rect x="1082" y="161" width="17" height="5" fill="#00ff00"/><rect x="1102" y="161" width="17" height="5" fill="#00ff00"/><rect x="1122" y="161" width="17" height="5" fill="#00ff00"/><rect x="1142" y="161" width="17" height="5" fill="#00ff00"/><rect x="1162" y="161" width="17" height="5" fill="#00ff00"/><rect x="1182" y="161" width="17" height="5" fill="#ff0000"/>
        </g>
        <g class="font-['Liberation_Sans',sans-serif]" text-anchor="end">
          <text x="1198" y="201" fill="#00ff00" class="text-[38px]">1.50787</text>
          <g class="text-[16px]">
            <text x="1165" y="222" fill="#808080">Spread</text><text x="1165" y="237" fill="#696969">Pips to Open</text><text x="1165" y="252" fill="#696969">Hi to Low</text><text x="1165" y="267" fill="#696969">Daily Av</text>
          </g>
          <g font-weight="700" class="text-[16px]">
            <text x="1200" y="222" fill="#ff8c00">7.0</text><text x="1200" y="237" fill="#00ff00">359</text><text x="1200" y="252" fill="#ff8c00">800</text><text x="1200" y="267" fill="#ff4500">1354.0</text>
          </g>
        </g>
        <!-- trend box -->
        <g fill="#00ff00" shape-rendering="crispEdges">
          <path stroke="#00ff00" fill="none" stroke-dasharray="3 1" d="M1114 374.500h79M1114 376.500h79"/>
          <path stroke="#00ff00" fill="none" stroke-dasharray="3 1" d="M1114 435.500h79M1114 437.500h79"/>
          <path stroke="#ff8c00" fill="none" stroke-dasharray="3 1" d="M1114 487.500h79"/>
        </g>
        <text x="1153" y="396" text-anchor="middle" fill="#d08000" class="text-[14px]">[weak]</text>
        <text x="1153" y="424" text-anchor="middle" fill="#00ff00" font-weight="700" stroke="#00ff00" stroke-width=".6" textLength="24" lengthAdjust="spacingAndGlyphs" class="text-[27px] font-['Liberation_Sans',sans-serif]">UP</text>
        <g class="text-[14px]">
          <text x="1116" y="458" fill="#e0e0e0">40%</text><text x="1191" y="458" text-anchor="end" fill="#e00000">DOWN</text>
          <text x="1116" y="478" fill="#e0e0e0">60%</text><text x="1190" y="478" text-anchor="end" fill="#00e000">UP</text>
          <text x="1118" y="502" text-anchor="middle" fill="#ff8c00">+</text><text x="1153" y="502" text-anchor="middle" fill="#ff8c00">Trend</text><text x="1187" y="502" text-anchor="middle" fill="#ff8c00">+</text>
        </g>
      </svg>

      <!-- one click trading panel -->
      <div class="absolute left-[7px] top-[19px] w-[175px] text-white">
        <div class="h-[20px] flex items-center">
          <div class="w-[40px] h-[20px] bg-gradient-to-b from-[#ee5a5a] to-[#c81c1c] border-b-0 flex flex-col items-center justify-end"><span class="text-[12px] mb-[2px]">SELL</span><span class="w-[33px] h-[1px] bg-[#7a1010]"></span></div>
          <span class="ml-[8px] w-[12px] flex justify-center"><span class="border-x-[3px] border-x-transparent border-t-[3px] border-t-[#a0a8b0]"></span></span>
          <div class="w-[55px] h-[18px] bg-white border border-[#b0b0b0] text-[#808080] text-[12px] flex items-center justify-end pr-[4px]">0.02</div>
          <span class="w-[18px] flex justify-center"><span class="border-x-[3px] border-x-transparent border-b-[3px] border-b-[#a0a8b0]"></span></span>
          <div class="ml-auto w-[41px] h-[20px] bg-gradient-to-b from-[#ee5a5a] to-[#c81c1c] flex flex-col items-center justify-end"><span class="text-[12px] mb-[2px]">BUY</span><span class="w-[33px] h-[1px] bg-[#7a1010]"></span></div>
        </div>
        <div class="flex gap-[3px]">
          <div class="w-[86px] h-[28px] bg-gradient-to-b from-[#d02020] to-[#9a0808] flex items-end pl-[16px]">
            <span class="text-[12px] font-bold mb-[5px]">131</span>
            <span class="ml-[4px] text-[24px] font-light tracking-[-1px] font-['Roboto',sans-serif] mb-[3px]">55</span>
            <span class="ml-[5px] mb-[14px] text-[11px] font-bold">1</span>
          </div>
          <div class="w-[86px] h-[28px] bg-gradient-to-b from-[#d02020] to-[#9a0808] flex items-end pl-[15px]">
            <span class="text-[12px] font-bold mb-[5px]">131</span>
            <span class="ml-[5px] text-[24px] font-light tracking-[-1px] font-['Roboto',sans-serif] mb-[3px]">58</span>
            <span class="ml-[5px] mb-[14px] text-[11px] font-bold">1</span>
          </div>
        </div>
      </div>
    </div>
    <div class="mt-[1px] h-[20px] border-t border-black flex items-start text-[#6e7480] relative whitespace-nowrap tracking-[0.2px]">
      <span class="ml-[13px] mt-[4px] w-[66px]">EURUSD:,H1</span>
      <span class="ml-[8px] mt-[3px] w-[1px] h-[12px] bg-[#808080]"></span>
      <span class="ml-[8px] mt-[4px] w-[71px]">XAUUSD:,M30</span>
      <span class="ml-[12px] -mt-[1px] w-[89px] h-[20px] bg-white border-x border-b border-black text-black flex items-center justify-center">EURJPY:,M30</span>
      <span class="ml-[10px] mt-[4px] w-[62px]">AUDUSD:,H1</span>
      <span class="ml-[11px] mt-[3px] w-[1px] h-[12px] bg-[#808080]"></span>
      <span class="ml-[9px] mt-[4px] w-[59px]">USDJPY:,H1</span>
      <span class="ml-[11px] mt-[3px] w-[1px] h-[12px] bg-[#808080]"></span>
      <span class="ml-[9px] mt-[4px] w-[66px]">EURJPY:,M30</span>
      <span class="ml-[12px] mt-[3px] w-[1px] h-[12px] bg-[#808080]"></span>
      <span class="absolute left-[1053px] top-[5px] border-y-[4px] border-y-transparent border-r-[4px] border-r-[#a0a0a0]"></span>
      <span class="absolute left-[1070px] top-[5px] border-y-[4px] border-y-transparent border-l-[4px] border-l-[#a0a0a0]"></span>
    </div>
  </div>
</main>

<!-- terminal dock -->
<footer class="h-[167px] flex pl-[6px] pr-[6px] pt-[1px] bg-[#f0f0f0] border-t-[3px] border-[#f8f8f8]">
  <div class="w-[15px] flex flex-col items-center">
    <svg class="mt-[2px] w-[7px] h-[7px]" viewBox="0 0 7 7"><path d="M.5.5l6 6M6.500.5l-6 6" stroke="#222" stroke-width="1.600"/></svg>
    <div class="mt-[3px] w-[14px] flex-1 mb-[3px] bg-gradient-to-b from-[#dde8f3] to-[#c3d4e6] flex items-end justify-center">
      <span class="[writing-mode:vertical-rl] rotate-180 text-[#4a5a6a] mb-[1px]">Terminal</span>
    </div>
  </div>
  <div class="flex-1 flex flex-col border-t border-[#a8a8a8] bg-white relative">
    <div class="flex h-[140px]">
      <div class="w-[1232px]">
        <div class="h-[24px] pt-[1px] grid grid-cols-[108px_186px_83px_67px_84px_84px_84px_84px_185px_84px_84px_99px] items-center bg-gradient-to-b from-white to-[#f0f0f0] border-b border-[#b0b0b0] text-[#222] tracking-[0.15px]">
          <span class="pl-[6px] h-full flex items-center border-r border-[#e0e0e0]">Order <span class="ml-[12px] text-[#9a9a9a]">⁄</span></span>
          <span class="pr-[6px] h-full flex items-center justify-end border-r border-[#e0e0e0]">Time</span>
          <span class="pr-[6px] h-full flex items-center justify-end border-r border-[#e0e0e0]">Type</span>
          <span class="pr-[6px] h-full flex items-center justify-end border-r border-[#e0e0e0]">Size</span>
          <span class="pr-[6px] h-full flex items-center justify-end border-r border-[#e0e0e0]">Symbol</span>
          <span class="pr-[6px] h-full flex items-center justify-end border-r border-[#e0e0e0]">Price</span>
          <span class="pr-[6px] h-full flex items-center justify-end border-r border-[#e0e0e0]">S / L</span>
          <span class="pr-[6px] h-full flex items-center justify-end border-r border-[#e0e0e0]">T / P</span>
          <span class="pr-[6px] h-full flex items-center justify-end border-r border-[#e0e0e0]">Time</span>
          <span class="pr-[6px] h-full flex items-center justify-end border-r border-[#e0e0e0]">Price</span>
          <span class="pr-[6px] h-full flex items-center justify-end border-r border-[#e0e0e0]">Swap</span>
          <span class="pr-[6px] h-full flex items-center justify-end">Profit</span>
        </div>
        <div class="h-[20px] grid grid-cols-[108px_186px_83px_756px_99px] items-center bg-[#ebebeb] border-t border-[#c8c8c8] tracking-[-0.15px]">
          <span class="flex items-center pl-[3px] h-full border-r border-[#c0c0c0]"><svg class="w-[12px] h-[14px]"><use href="#order-up"/></svg><span class="ml-[10px]">446107</span></span>
          <span class="pr-[3px] h-full flex items-center justify-end border-r border-[#c0c0c0] tracking-[-0.3px]">2013.07.19 17:13</span>
          <span class="pr-[3px] h-full flex items-center justify-end border-r border-[#c0c0c0]">balance</span>
          <span class="pr-[3px] h-full flex items-center justify-end border-r border-[#c0c0c0]">agent '50587' - #446081</span>
          <span class="pr-[4px] text-right">0.05</span>
        </div>
        <div class="h-[20px] grid grid-cols-[108px_186px_83px_756px_99px] items-center bg-white border-t border-[#c8c8c8] tracking-[-0.15px]">
          <span class="flex items-center pl-[3px] h-full border-r border-[#c0c0c0]"><svg class="w-[12px] h-[14px]"><use href="#order-up"/></svg><span class="ml-[10px]">446109</span></span>
          <span class="pr-[3px] h-full flex items-center justify-end border-r border-[#c0c0c0] tracking-[-0.3px]">2013.07.19 17:13</span>
          <span class="pr-[3px] h-full flex items-center justify-end border-r border-[#c0c0c0]">balance</span>
          <span class="pr-[3px] h-full flex items-center justify-end border-r border-[#c0c0c0]">agent '50587' - #446084</span>
          <span class="pr-[4px] text-right">0.05</span>
        </div>
        <div class="h-[20px] grid grid-cols-[108px_186px_83px_756px_99px] items-center bg-[#3399ff] text-white tracking-[-0.15px]">
          <span class="flex items-center pl-[3px] h-full border-r border-[#c0c0c0]"><svg class="w-[12px] h-[14px]"><use href="#order-up"/></svg><span class="ml-[10px]">446111</span></span>
          <span class="pr-[3px] h-full flex items-center justify-end border-r border-[#c0c0c0] tracking-[-0.3px]">2013.07.19 17:13</span>
          <span class="pr-[3px] h-full flex items-center justify-end border-r border-[#c0c0c0]">balance</span>
          <span class="pr-[3px] h-full flex items-center justify-end border-r border-[#c0c0c0]">agent '50587' - #446088</span>
          <span class="pr-[4px] text-right">0.05</span>
        </div>
        <div class="h-[20px] grid grid-cols-[108px_186px_83px_756px_99px] items-center bg-white border-t border-[#c8c8c8] tracking-[-0.15px]">
          <span class="flex items-center pl-[3px] h-full border-r border-[#c0c0c0]"><svg class="w-[12px] h-[14px]"><use href="#order-up"/></svg><span class="ml-[10px]">446179</span></span>
          <span class="pr-[3px] h-full flex items-center justify-end border-r border-[#c0c0c0] tracking-[-0.3px]">2013.07.19 17:29</span>
          <span class="pr-[3px] h-full flex items-center justify-end border-r border-[#c0c0c0]">balance</span>
          <span class="pr-[3px] h-full flex items-center justify-end border-r border-[#c0c0c0]">agent '50587' - #446129</span>
          <span class="pr-[4px] text-right">0.05</span>
        </div>
        <div class="h-[20px] flex items-center bg-[#c4c4c4] font-bold pr-[4px]">
          <svg class="ml-[7px] w-[8px] h-[8px]" viewBox="0 0 8 8"><circle cx="4" cy="4" r="3.500" fill="#a8a8a8" stroke="#808080"/></svg>
          <span class="ml-[10px] whitespace-pre tracking-[-0.05px]">Profit/Loss: 11.33  Credit: 50.00  Deposit: 2.70  Withdrawal: 0.00</span>
          <span class="ml-auto">14.03</span>
        </div>
      </div>
      <div class="flex-1 flex flex-col items-center relative">
        <svg class="mt-[8px] w-[12px] h-[7px]"><use href="#chev-up"/></svg>
        <div class="absolute top-[104px] w-[14px] h-[19px] bg-[#2b2b2b]"></div>
        <svg class="absolute top-[129px] w-[12px] h-[7px]"><use href="#chev-dn"/></svg>
      </div>
    </div>
    <div class="flex-1 border-t border-black bg-[#f0f0f0] flex items-start text-[#6e7480] whitespace-nowrap">
      <span class="ml-[11px] mt-[4px] w-[28px]">Trade</span>
      <span class="ml-[11px] -mt-[1px] w-[95px] h-[17px] bg-white border-x border-b border-black text-black flex items-center justify-center">Account History</span>
      <span class="ml-[11px] mt-[4px] w-[27px]">Alerts</span>
      <span class="ml-[11px] mt-[3px] w-[1px] h-[12px] bg-[#808080]"></span>
      <span class="ml-[8px] mt-[4px] w-[36px]">Mailbox</span>
      <span class="ml-[11px] mt-[3px] w-[1px] h-[12px] bg-[#808080]"></span>
      <span class="ml-[8px] mt-[4px] w-[33px]">Signals</span>
      <span class="ml-[11px] mt-[3px] w-[1px] h-[12px] bg-[#808080]"></span>
      <span class="ml-[8px] mt-[4px] w-[51px]">Code Base</span>
      <span class="ml-[11px] mt-[3px] w-[1px] h-[12px] bg-[#808080]"></span>
      <span class="ml-[8px] mt-[4px] w-[37px]">Experts</span>
      <span class="ml-[11px] mt-[3px] w-[1px] h-[12px] bg-[#808080]"></span>
      <span class="ml-[9px] mt-[4px] w-[34px]">Journal</span>
      <span class="ml-[11px] mt-[3px] w-[1px] h-[12px] bg-[#808080]"></span>
    </div>
  </div>
</footer>

<script>
  // x, wick top, wick bottom, body top, body bottom, white body?
  const candles = [
    [229, 255, 388, 302, 383, 1], [261, 352, 445, 384, 390, 1], [293, 290, 432, 312, 389, 0],
    [325, 307, 371, 312, 331, 1], [357, 285, 371, 332, 347, 1], [389, 307, 406, 346, 386, 1],
    [421, 309, 387, 387, 424, 1], [453, 349, 367, 413, 425, 0], [485, 352, 352, 352, 413, 0],
    [517, 151, 172, 172, 352, 0], [549, 151, 261, 173, 256, 1], [581, 185, 257, 257, 293, 1],
    [645, 221, 232, 232, 291, 0], [677, 225, 231, 231, 268, 1], [709, 268, 268, 268, 301, 1],
    [741, 201, 213, 213, 300, 0], [773, 151, 239, 211, 220, 1], [805, 133, 222, 162, 221, 0],
    [837, 158, 162, 162, 308, 1], [869, 302, 302, 302, 307, 0], [901, 303, 303, 303, 366, 1],
    [933, 267, 267, 267, 363, 0], [965, 266, 266, 266, 283, 1],
  ];
  const lime = '#00ff00';
  const box = document.getElementById('candles');
  const rect = (x, y, w, h, fill) => {
    const r = document.createElementNS('http://www.w3.org/2000/svg', 'rect');
    r.setAttribute('x', x); r.setAttribute('y', y);
    r.setAttribute('width', w); r.setAttribute('height', h);
    r.setAttribute('fill', fill);
    box.appendChild(r);
  };
  // the first bar is cut by the chart frame
  rect(197, 195, 1, 196, lime);
  rect(197, 258, 13, 47, lime);
  rect(197, 259, 12, 45, '#fff');
  rect(601, 290, 25, 1, lime);
  candles.forEach(([x, hi, lo, top, bot, white]) => {
    if (lo > hi) rect(x, hi, 1, lo - hi, lime);
    rect(x - 12, top, 25, bot - top, lime);
    rect(x - 11, top + 1, 23, bot - top - 2, white ? '#fff' : '#000');
  });
</script>
</body>
</html>
